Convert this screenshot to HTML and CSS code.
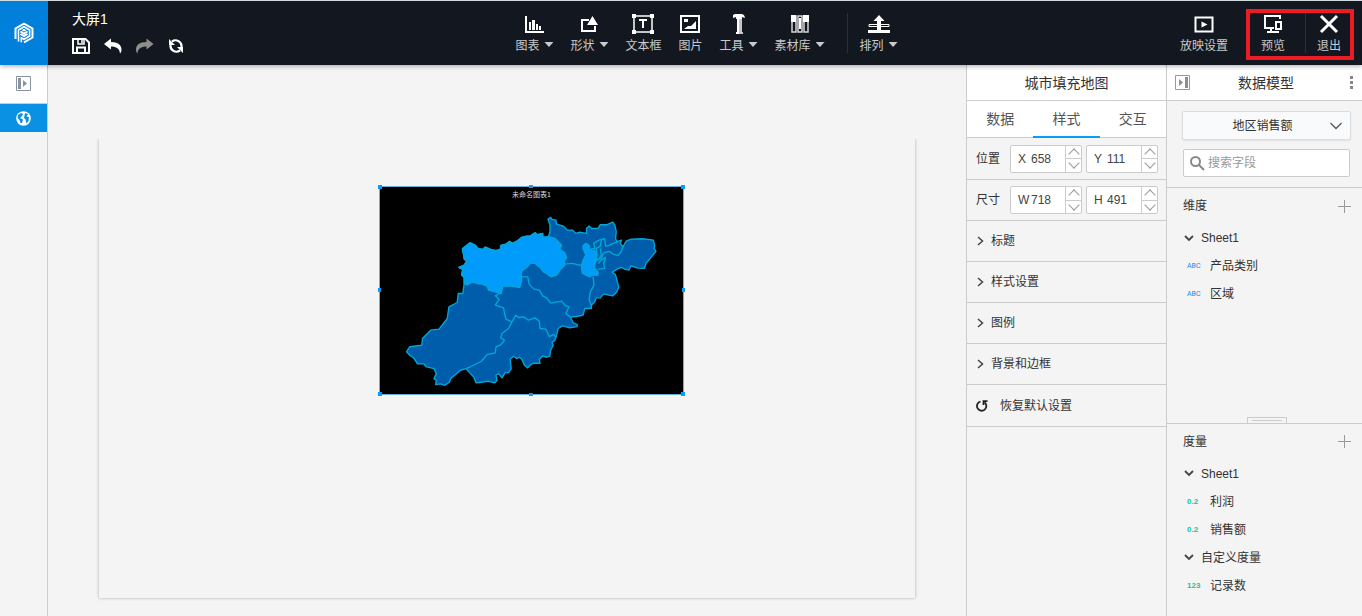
FILE: index.html
```html
<!DOCTYPE html>
<html lang="zh-CN">

<head>
    <meta charset="UTF-8">
    <meta name="viewport" content="width=device-width, initial-scale=1.0">
    <title>大屏1</title>
    <link rel="stylesheet" href="styles.css">
</head>

<body>
    <header class="header">
        <div class="logo">
            <svg width="20" height="22" viewBox="0 0 20 22" fill="none" stroke="#fff" stroke-width="2">
                <path d="M1.500 17V6.500L10 1.600l8.500 4.900v9L10 20.400" />
                <path d="M4.500 19.500V8L10 4.700 15.600 8v6L10 17.300 7.300 15.800v4.500" stroke-width="1.600" />
                <path d="M6.500 9.500l3.500 2 3.500-2M6.500 12l3.500 2 3.500-2" />
                <path d="M7.500 8.200L10 6.800l2.500 1.400L10 9.600z" fill="#fff" stroke="none" />
            </svg>
        </div>
        <div class="bar">
            <div class="file">
                <h1 class="fileName">大屏1</h1>
                <div class="fileTools">
                    <button title="保存"><svg width="18" height="16" viewBox="0 0 18 16" fill="none" stroke="#fff" stroke-width="2"><path d="M1 1h12.500L17 4.500V15H1z" /><path d="M5 15V9.500h8V15" /><path d="M6 1v5h6V1" stroke-width="1.500" /><path d="M10 2v3" stroke-width="1.500" /></svg></button>
                    <button title="撤销"><svg width="18" height="16" viewBox="0 0 18 16" fill="#fff"><path d="M0 6L7 .5V4c7 0 10.500 3 10.500 7.500 0 1.500-.5 3-1.500 4C15.500 10.500 12.500 8.500 7 8.500v3z" /></svg></button>
                    <button title="重做"><svg width="18" height="16" viewBox="0 0 18 16" fill="#8e8e8e"><path d="M17.500 6l-7-5.500V4C3.500 4 0 7 0 11.500c0 1.500.5 3 1.500 4C2 10.500 5 8.500 10.500 8.500v3z" /></svg></button>
                    <button title="刷新"><svg width="16" height="16" viewBox="0 0 16 16" fill="none" stroke="#fff" stroke-width="2.200"><path d="M4 3.500a6 6 0 0 1 9.500 5.500M12 12.500A6 6 0 0 1 2.500 7" /><path d="M1 1v6h6zM15 15V9H9z" fill="#fff" stroke="none" /></svg></button>
                </div>
            </div>
            <nav class="tools">
                <button class="tool">
                    <svg width="20" height="18" viewBox="0 0 20 18" fill="#fff"><path d="M1 1h2v15h17v2H1zM5 7h2v8H5zM8 5h3v10H8zM12 9h2v6h-2zM15 11h2v4h-2z" /></svg>
                    <span class="toolName">图表<i class="caret"></i></span>
                </button>
                <button class="tool">
                    <svg width="20" height="18" viewBox="0 0 20 18"><path d="M10 5H3v11h13v-5" fill="none" stroke="#fff" stroke-width="2" /><path d="M13.500 1l5.500 9H8z" fill="#fff" /></svg>
                    <span class="toolName">形状<i class="caret"></i></span>
                </button>
                <button class="tool">
                    <svg width="22" height="20" viewBox="0 0 22 20"><path d="M2 2h18v16H2z" fill="none" stroke="#fff" stroke-width="1.500" /><path d="M0 0h4v4H0zM18 0h4v4h-4zM0 16h4v4H0zM18 16h4v4h-4zM10 6h2v8h-2zM7 5h8v2H7z" fill="#fff" /></svg>
                    <span class="toolName">文本框</span>
                </button>
                <button class="tool">
                    <svg width="20" height="18" viewBox="0 0 20 18"><path d="M1 1h18v16H1z" fill="none" stroke="#fff" stroke-width="2" /><path d="M4 4h4v3H4zM4 14l4-3h3l5-5v8z" fill="#fff" /></svg>
                    <span class="toolName">图片</span>
                </button>
                <button class="tool">
                    <svg width="16" height="20" viewBox="0 0 16 20" fill="#fff"><path d="M2 1l2-1h6c2.500 0 3.500 1.500 4 4l-3-1v2H5V3L2 4zM6 5h2v15H5v-2h1z" /><path d="M8 5h3v13h1v2H8z" fill="#c4c6c8" /></svg>
                    <span class="toolName">工具<i class="caret"></i></span>
                </button>
                <button class="tool">
                    <svg width="18" height="18" viewBox="0 0 18 18"><path d="M1 1h4v16H1zM7 1h4v16H7zM13 1h4v16h-4z" fill="none" stroke="#d5d6d8" stroke-width="1.500" /><path d="M0 0h5v7H0zM12 0h6v7h-6zM8 3h2v11H8z" fill="#fff" /></svg>
                    <span class="toolName">素材库<i class="caret"></i></span>
                </button>
                <span class="split"></span>
                <button class="tool">
                    <svg width="22" height="18" viewBox="0 0 22 18" fill="#fff"><path d="M11 0l5.500 6H13v9H9V6H5.500zM0 15h22v3H0z" /><path d="M9 9.500H1v2h8M13 9.500h8v2h-8" fill="none" stroke="#fff" /></svg>
                    <span class="toolName">排列<i class="caret"></i></span>
                </button>
            </nav>
            <div class="actions">
                <button class="tool">
                    <svg width="20" height="18" viewBox="0 0 20 18"><path d="M1.500 2.500h17v14h-17z" fill="none" stroke="#fff" stroke-width="2" /><path d="M7.500 6.500l6 3-6 3z" fill="#fff" /></svg>
                    <span class="toolName">放映设置</span>
                </button>
                <div class="marked">
                    <button class="tool">
                        <svg width="20" height="18" viewBox="0 0 20 18" fill="none" stroke="#fff" stroke-width="2"><path d="M17 4V1H2v12h9M8 13v4M4 17h12M13 7h5v7h-5z" /></svg>
                        <span class="toolName">预览</span>
                    </button>
                    <span class="split"></span>
                    <button class="tool">
                        <svg width="20" height="18" viewBox="0 0 20 18" fill="none" stroke="#fff" stroke-width="3"><path d="M2 1l16 16M18 1L2 17" /></svg>
                        <span class="toolName">退出</span>
                    </button>
                </div>
            </div>
        </div>
    </header>

    <div class="main">
        <aside class="side">
            <button class="sideOpen" title="展开">
                <svg width="15" height="15" viewBox="0 0 15 15"><path d="M.5.5h14v14H.5z" fill="none" stroke="#8a93a0" /><path d="M2 2h3v11H2zM7 4l4 3.500L7 11z" fill="#8a93a0" /></svg>
            </button>
            <button class="sideItem" title="地图">
                <svg width="15" height="15" viewBox="0 0 15 15"><circle cx="7.500" cy="7.500" r="7.300" fill="#fff" /><path d="M2 4l3-2 2 1-1 2-2 2 3 1.500L6 12H4.500L3.500 9 1.500 7zM9 2l3 1-1.500 2.500L13 6l-.5 4-2 2.500-1-4L8 7z" fill="#0a91e3" /></svg>
            </button>
        </aside>

        <main class="work">
            <div class="screen">
                <div class="chart">
                    <h2 class="chartTitle">未命名图表1</h2>
                    <svg class="map" viewBox="12 21 915 621" preserveAspectRatio="none">
                        <!-- 全市轮廓 -->
                        <polygon class="area" points="266,310 266,292 258,284 262,268 250,262 265,256 274,244 266,236 264,222 261,206 275,195 284,188 300,196 308,206 322,208 330,201 346,208 362,212 375,208 377,196 392,192 404,184 412,190 424,184 440,172 455,168 465,168 480,158 487,164 503,160 503,172 520,170 525,155 525,135 519,118 527,112 531,118 543,120 545,132 565,138 577,150 593,150 603,160 615,156 635,160 635,145 643,138 651,145 670,145 677,134 697,134 715,126 721,136 725,155 723,175 727,185 741,180 737,190 745,200 755,183 770,177 805,176 837,180 841,195 839,205 845,214 830,232 815,250 810,265 790,264 770,257 763,270 753,268 740,262 727,268 713,276 723,284 727,300 731,315 733,320 727,335 715,347 703,345 687,341 677,353 665,353 660,365 650,375 650,385 630,385 625,405 605,409 587,411 595,427 607,433 607,439 585,443 563,437 550,445 545,465 540,480 531,487 535,495 527,510 525,527 515,531 503,527 493,537 495,549 475,549 465,555 458,563 448,555 440,537 432,531 425,535 415,528 405,537 408,565 400,577 390,577 380,593 370,580 362,585 365,600 358,608 340,603 302,608 295,590 282,577 272,565 255,570 240,583 225,595 222,605 208,615 195,611 180,613 182,600 175,595 182,580 175,565 150,559 145,551 125,551 115,535 102,525 92,515 102,499 138,495 140,475 165,450 190,447 215,415 217,400 220,380 245,367 248,340 262,340" />
                        <polygon class="areaHot" points="266,310 266,292 258,284 262,268 250,262 265,256 274,244 266,236 264,222 261,206 275,195 284,188 300,196 308,206 322,208 330,201 346,208 362,212 375,208 377,196 392,192 404,184 412,190 424,184 440,172 455,168 465,168 480,158 487,164 503,160 503,172 520,170 540,175 550,185 560,195 555,208 570,218 575,232 568,245 570,255 555,270 545,285 527,290 515,280 505,275 495,262 480,250 465,250 455,262 443,270 438,280 440,300 435,318 433,322 410,318 383,318 380,330 378,340 360,335 340,330 335,318 320,312 305,310 290,306 275,314" />
                        <polygon class="areaHot" points="625,196 633,190 643,196 645,208 660,212 667,225 665,240 657,262 670,275 670,285 655,285 645,290 623,280 620,262 625,240 633,225 625,205" />
                        <!-- 区县界线 -->
                        <polyline class="edge" points="378,337 360,347 372,357 360,375 385,383 388,400 392,417 410,425 400,445 380,460 376,473 388,480 375,495 362,500 360,518 335,523 318,543 295,555 272,565" />
                        <polyline class="edge" points="410,425 422,405 430,412 445,410 460,420 480,413 493,423 495,445 513,447 523,469 535,463 543,470" />
                        <polyline class="edge" points="440,290 458,290 462,312 477,327 493,330 503,347 515,353 527,369 560,363 570,375 582,380 573,400 587,411" />
                        <polyline class="edge" points="570,252 593,250 615,256 623,250" />
                        <polyline class="edge" points="655,290 658,315 647,335 643,357 650,377" />
                        <polyline class="edge" points="645,208 660,205 657,190 673,180 690,176 693,198 705,195 717,190 727,186" />
                        <polyline class="edge" points="680,180 677,198 665,205 667,225" />
                        <polyline class="edge" points="677,205 680,225 670,240 665,240 680,235 687,218 705,214 715,222 730,226 740,215 745,200" />
                        <polyline class="edge" points="670,250 680,240 693,232 687,250 690,265 670,268" />
                    </svg>
                    <i class="dot dotTL"></i><i class="dot dotT"></i><i class="dot dotTR"></i>
                    <i class="dot dotL"></i><i class="dot dotR"></i>
                    <i class="dot dotBL"></i><i class="dot dotB"></i><i class="dot dotBR"></i>
                </div>
            </div>
        </main>

        <section class="panel stylePanel">
            <h2 class="panelTitle">城市填充地图</h2>
            <div class="tabs">
                <button class="tab">数据</button>
                <button class="tab tabOn">样式</button>
                <button class="tab">交互</button>
            </div>
            <div class="sizeRow sizeFirst">
                <span>位置</span>
                <div class="spin">
                    <label for="posX">X</label><input id="posX" type="text" value="658">
                    <div class="arrows"><button class="up" title="增加"></button><button class="down" title="减少"></button></div>
                </div>
                <div class="spin">
                    <label for="posY">Y</label><input id="posY" type="text" value="111">
                    <div class="arrows"><button class="up" title="增加"></button><button class="down" title="减少"></button></div>
                </div>
            </div>
            <div class="sizeRow">
                <span>尺寸</span>
                <div class="spin">
                    <label for="sizeW">W</label><input id="sizeW" type="text" value="718">
                    <div class="arrows"><button class="up" title="增加"></button><button class="down" title="减少"></button></div>
                </div>
                <div class="spin">
                    <label for="sizeH">H</label><input id="sizeH" type="text" value="491">
                    <div class="arrows"><button class="up" title="增加"></button><button class="down" title="减少"></button></div>
                </div>
            </div>
            <button class="fold"><svg width="7" height="10" viewBox="0 0 7 10"><path d="M1 1l4.500 4L1 9" /></svg>标题</button>
            <button class="fold"><svg width="7" height="10" viewBox="0 0 7 10"><path d="M1 1l4.500 4L1 9" /></svg>样式设置</button>
            <button class="fold"><svg width="7" height="10" viewBox="0 0 7 10"><path d="M1 1l4.500 4L1 9" /></svg>图例</button>
            <button class="fold"><svg width="7" height="10" viewBox="0 0 7 10"><path d="M1 1l4.500 4L1 9" /></svg>背景和边框</button>
            <button class="fold reset"><svg width="12" height="12" viewBox="0 0 12 12"><path d="M4.500 1.500a4.700 4.700 0 1 0 4 .8" /><path d="M7.500 5V1.200H11.500" /></svg>恢复默认设置</button>
        </section>

        <section class="panel dataPanel">
            <div class="panelTitle dataTitle">
                <button title="收起"><svg width="15" height="15" viewBox="0 0 15 15"><path d="M.5.5h14v14H.5z" fill="none" stroke="#999" /><path d="M10 2h3v11h-3zM4 4l4 3.500L4 11z" fill="#8a8f96" /></svg></button>
                <h2>数据模型</h2>
                <button title="更多"><svg width="3" height="13" viewBox="0 0 3 13" fill="#888"><path d="M0 0h3v3H0zM0 5h3v3H0zM0 10h3v3H0z" /></svg></button>
            </div>
            <div class="pick">
                <div class="model">
                    <select aria-label="数据模型"><option>地区销售额</option></select>
                    <svg width="12" height="8" viewBox="0 0 12 8" fill="none" stroke="#555" stroke-width="1.300"><path d="M.5 1L6 6.500 11.500 1" /></svg>
                </div>
                <div class="search">
                    <svg width="15" height="15" viewBox="0 0 15 15" fill="none" stroke="#888" stroke-width="2"><circle cx="5.500" cy="5.500" r="4.500" /><path d="M9 9l5 5" /></svg>
                    <input type="text" placeholder="搜索字段" aria-label="搜索字段">
                </div>
            </div>
            <div class="group dims">
                <div class="groupHead"><h3>维度</h3><button class="plus" title="添加"></button></div>
                <ul>
                    <li class="sheet"><svg width="10" height="7" viewBox="0 0 10 7"><path d="M1 1l4 4 4-4" /></svg>Sheet1</li>
                    <li class="field"><b class="abc">ABC</b>产品类别</li>
                    <li class="field"><b class="abc">ABC</b>区域</li>
                </ul>
                <div class="grip"></div>
            </div>
            <div class="group measures">
                <div class="groupHead"><h3>度量</h3><button class="plus" title="添加"></button></div>
                <ul>
                    <li class="sheet"><svg width="10" height="7" viewBox="0 0 10 7"><path d="M1 1l4 4 4-4" /></svg>Sheet1</li>
                    <li class="field"><b class="num">0.2</b>利润</li>
                    <li class="field"><b class="num">0.2</b>销售额</li>
                    <li class="sheet"><svg width="10" height="7" viewBox="0 0 10 7"><path d="M1 1l4 4 4-4" /></svg>自定义度量</li>
                    <li class="field"><b class="num">123</b>记录数</li>
                </ul>
            </div>
        </section>
    </div>
</body>

</html>
```
FILE: styles.css
```css
* {
    box-sizing: border-box;
}
body {
    margin: 0;
    height: 100vh;
    display: flex;
    flex-direction: column;
    overflow: hidden;
    border-top: 1px solid #d3dde0;
    background: #f4f4f4;
    color: #333;
    font: 12px/18px "Liberation Sans", "Noto Sans CJK SC", sans-serif;
}
h1, h2, h3, ul {
    margin: 0;
    padding: 0;
    font-size: 12px;
    font-weight: normal;
    list-style: none;
}
button, input, select {
    margin: 0;
    padding: 0;
    border: 0;
    background: none;
    color: inherit;
    font: inherit;
}
button {
    cursor: pointer;
}
svg {
    display: block;
    flex: none;
}

/* 顶部工具栏 */
.header {
    display: flex;
    flex: none;
    height: 64px;
    position: relative;
    background: #131820;
    box-shadow: 0 1px 5px rgba(0, 0, 0, 0.35);
    z-index: 2;
}
.logo {
    width: 48px;
    display: flex;
    align-items: center;
    justify-content: center;
    background: #0080db;
}
.bar {
    flex: 1;
    display: grid;
    grid-template-columns: 1fr auto 1fr;
}
.file {
    padding: 8px 0 0 24px;
}
.fileName {
    font-size: 14px;
    line-height: 20px;
    color: #fff;
}
.fileTools {
    display: flex;
    gap: 14px;
    margin-top: 9px;
}
.tools {
    display: flex;
    gap: 17px;
    padding-left: 3px;
}
.tool {
    display: flex;
    flex-direction: column;
    align-items: center;
    padding-top: 13px;
    color: #c8cacc;
    white-space: nowrap;
}
.tool > svg {
    height: 20px;
}
.toolName {
    display: flex;
    gap: 5px;
    margin-top: 3px;
}
.caret {
    width: 9px;
    height: 5px;
    margin-top: 5px;
    background: #c8cacc;
    clip-path: polygon(0 0, 100% 0, 50% 100%);
}
.split {
    width: 1px;
    height: 40px;
    margin: 12px -5px 0 5px;
    background: #2b3038;
}
.actions {
    display: flex;
    justify-content: flex-end;
    gap: 18px;
    padding-right: 8px;
}
.marked {
    display: flex;
    gap: 16px;
    height: 51px;
    margin-top: 8px;
    padding: 0 9px 0 11px;
    border: 4px solid #ec1c24;
}
.marked .tool {
    padding-top: 1px;
}
.marked .split {
    margin: 0 -5px 0 4px;
}

.main {
    flex: 1;
    display: flex;
    min-height: 0;
}

/* 左侧栏 */
.side {
    width: 48px;
    flex: none;
    border-right: 1px solid #ccc;
}
.side button {
    display: flex;
    align-items: center;
    justify-content: center;
    width: 100%;
}
.side .sideOpen {
    height: 39px;
    padding-bottom: 2px;
    background: #fff;
    border-bottom: 1px solid #ccc;
}
.side .sideItem {
    height: 28px;
    background: #0a91e3;
}

/* 画布 */
.work {
    flex: 1;
    padding: 74px 51px 0;
}
.screen {
    position: relative;
    aspect-ratio: 16 / 9;
    box-shadow: 0 0 3px rgba(0, 0, 0, 0.3);
    clip-path: inset(0 -4px -4px -4px);
}
.chart {
    position: absolute;
    left: 34.3%;
    top: 10.2%;
    width: 37.4%;
    height: 45.6%;
    background: #000;
    border: 1px solid #68aeda;
}
.chartTitle {
    position: absolute;
    top: 3px;
    width: 100%;
    text-align: center;
    font-size: 7px;
    line-height: 10px;
    color: #ddd;
}
.map {
    width: 100%;
    height: 100%;
    fill: none;
    stroke: #00a8d8;
    stroke-width: 4;
    stroke-linejoin: round;
}
.area {
    fill: #005dab;
}
.areaHot {
    fill: #009bfb;
}
.dot {
    position: absolute;
    width: 4px;
    height: 4px;
    background: #0a9bf5;
}
.dotTL, .dotT, .dotTR {
    top: -2px;
}
.dotBL, .dotB, .dotBR {
    bottom: -2px;
}
.dotTL, .dotL, .dotBL {
    left: -2px;
}
.dotTR, .dotR, .dotBR {
    right: -2px;
}
.dotT, .dotB {
    left: calc(50% - 2px);
    height: 3px;
}
.dotL, .dotR {
    top: calc(50% - 2px);
    width: 3px;
}

/* 右侧面板 */
.panel {
    display: flex;
    flex-direction: column;
    flex: none;
    border-left: 1px solid #ccc;
}
.stylePanel {
    width: 200px;
}
.dataPanel {
    width: 196px;
}
.panelTitle {
    flex: none;
    height: 36px;
    background: #fff;
    border-bottom: 1px solid #ccc;
    font-size: 14px;
    line-height: 36px;
    text-align: center;
}
.tabs {
    display: flex;
    height: 37px;
    background: #fff;
    border-bottom: 1px solid #ccc;
}
.tab {
    flex: 1;
    font-size: 14px;
    color: #555;
}
.tabOn {
    margin-bottom: -1px;
    border-bottom: 2px solid #0a9bf5;
}
.sizeRow {
    display: flex;
    align-items: center;
    gap: 4px;
    height: 41px;
    padding-left: 9px;
    border-bottom: 1px solid #ccc;
}
.sizeRow > span {
    width: 30px;
}
.sizeFirst {
    height: 42px;
}
.spin {
    display: flex;
    align-items: center;
    width: 72px;
    height: 28px;
    background: #fff;
    border: 1px solid #ccc;
    border-radius: 2px;
    color: #444;
}
.spin label {
    width: 20px;
    padding-left: 7px;
}
.spin input {
    flex: 1;
    width: 0;
}
.arrows {
    display: flex;
    flex-direction: column;
    width: 16px;
    height: 100%;
    border-left: 1px solid #ccc;
}
.arrows button {
    flex: 1;
    display: flex;
    justify-content: center;
    align-items: center;
}
.arrows .down {
    border-top: 1px solid #ccc;
}
.arrows button::before {
    content: "";
    width: 7px;
    height: 7px;
    border: solid #999;
    border-width: 1px 0 0 1px;
    transform: translateY(2px) rotate(45deg);
}
.arrows .down::before {
    transform: translateY(-2px) rotate(225deg);
}
.fold {
    display: flex;
    align-items: center;
    gap: 7px;
    height: 41px;
    padding-left: 10px;
    border-bottom: 1px solid #ccc;
}
.fold path, .sheet path {
    fill: none;
    stroke: #444;
    stroke-width: 1.5;
}
.reset {
    height: 42px;
    gap: 12px;
    padding-left: 9px;
}
.reset path {
    stroke: #222;
    stroke-width: 1.8;
}

.dataTitle {
    display: flex;
    align-items: center;
    justify-content: space-between;
    padding: 0 9px 0 8px;
}
.dataTitle h2 {
    font-size: 14px;
    padding-right: 8px;
}
.pick {
    flex: none;
    padding: 10px 11px 10px 15px;
    border-bottom: 1px solid #ccc;
}
.model {
    display: flex;
    align-items: center;
    height: 29px;
    background: #f9fafb;
    border: 1px solid #d9dde0;
    border-radius: 2px;
    box-shadow: 0 1px 2px rgba(0, 0, 0, 0.08);
}
.model select {
    flex: 1;
    height: 100%;
    padding-left: 12px;
    appearance: none;
    text-align: center;
    text-align-last: center;
}
.model svg {
    margin-right: 8px;
}
.search {
    display: flex;
    align-items: center;
    gap: 3px;
    height: 28px;
    margin: 9px 1px 0;
    padding-left: 6px;
    background: #fff;
    border: 1px solid #ccc;
    border-radius: 2px;
}
.search input {
    flex: 1;
    width: 0;
}
.search input::placeholder {
    color: #999;
}
.group {
    position: relative;
    min-height: 0;
    padding: 0 11px 0 16px;
}
.dims {
    flex: 55 1 0;
    border-bottom: 1px solid #ccc;
}
.measures {
    flex: 45 1 0;
}
.groupHead {
    display: flex;
    align-items: center;
    justify-content: space-between;
    height: 36px;
}
.plus {
    width: 13px;
    height: 13px;
    background: linear-gradient(#999, #999) center / 13px 1px no-repeat, linear-gradient(#999, #999) center / 1px 13px no-repeat;
}
.sheet, .field {
    display: flex;
    align-items: center;
    height: 28px;
}
.sheet {
    gap: 7px;
    padding-left: 1px;
}
.sheet path {
    stroke-width: 1.8;
}
.field {
    padding-left: 4px;
}
.field b {
    width: 23px;
    font: bold 8px/10px "Liberation Sans", sans-serif;
    color: #12c4a8;
}
.field .abc {
    font: 7px/10px Roboto, sans-serif;
    color: #0a8ce6;
}
.grip {
    position: absolute;
    left: calc(50% - 18px);
    bottom: 0;
    width: 40px;
    height: 6px;
    border: 1px solid #ccc;
    border-bottom: 0;
}
.grip::before {
    content: "";
    display: block;
    height: 1px;
    margin: 2px 4px;
    background: #ccc;
}
```
